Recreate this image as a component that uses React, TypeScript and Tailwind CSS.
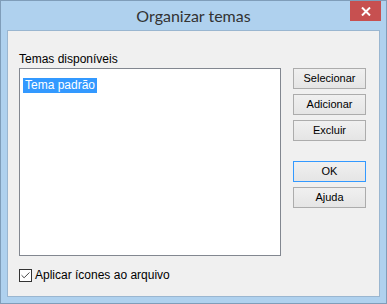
import { Check } from 'lucide-react';

function DlgButton({ label, primary }: { label: string; primary?: boolean }) {
  return (
    <button
      className={
        'w-[73px] h-[21px] flex items-center justify-center text-[11px] leading-none text-black bg-gradient-to-b from-[#f0f0f0] to-[#e5e5e5] border ' +
        (primary ? 'border-[#3399ff]' : 'border-[#acacac]')
      }
    >
      {label}
    </button>
  );
}

export default function App() {
  return (
    <div
      className="w-[387px] h-[304px] flex flex-col bg-[#afd1ee] border border-[#7f9db9] overflow-hidden"
      style={{ fontFamily: '"Liberation Sans", Arial, sans-serif' }}
    >
      {/* Title bar */}
      <div className="h-[29px] flex-shrink-0 relative flex items-center justify-center">
        <span
          className="text-[16px] text-[#333333] leading-none pt-[1px]"
          style={{ fontFamily: 'Lato, "Open Sans", sans-serif' }}
        >
          Organizar temas
        </span>
        <div className="absolute top-0 right-[5px] w-[31px] h-[20px] bg-[#c75050] flex items-center justify-center">
          <svg width="10" height="9" viewBox="0 0 10 9">
            <path d="M1 0.5 L9 8.5 M9 0.5 L1 8.5" stroke="white" strokeWidth="2" />
          </svg>
        </div>
      </div>

      {/* Client area */}
      <div className="flex-1 mx-[6px] mb-[6px] border border-[#9ab6d0] bg-[#f0f0f0] flex px-[11px] pt-[21px]">
        <div className="w-[262px] flex flex-col">
          <div className="h-[16px] text-[12px] leading-[14px] text-black">Temas disponíveis</div>
          <div className="h-[188px] border border-[#828790] bg-white p-[3px]">
            <span className="inline-block bg-[#3399ff] text-white text-[12px] leading-[15px] h-[15px] px-[2px]">
              Tema padrão
            </span>
          </div>
          <div className="mt-[12px] flex items-center gap-[3px]">
            <div className="w-[13px] h-[13px] border border-[#333333] bg-white flex items-center justify-center">
              <Check className="w-[11px] h-[11px] text-[#333333]" strokeWidth={2} />
            </div>
            <span className="text-[12px] leading-[14px] text-black">Aplicar ícones ao arquivo</span>
          </div>
        </div>
        <div className="ml-[12px] pt-[16px] flex flex-col">
          <div className="flex flex-col gap-[5px]">
            <DlgButton label="Selecionar" />
            <DlgButton label="Adicionar" />
            <DlgButton label="Excluir" />
          </div>
          <div className="mt-[20px] flex flex-col gap-[5px]">
            <DlgButton label="OK" primary />
            <DlgButton label="Ajuda" />
          </div>
        </div>
      </div>
    </div>
  );
}
